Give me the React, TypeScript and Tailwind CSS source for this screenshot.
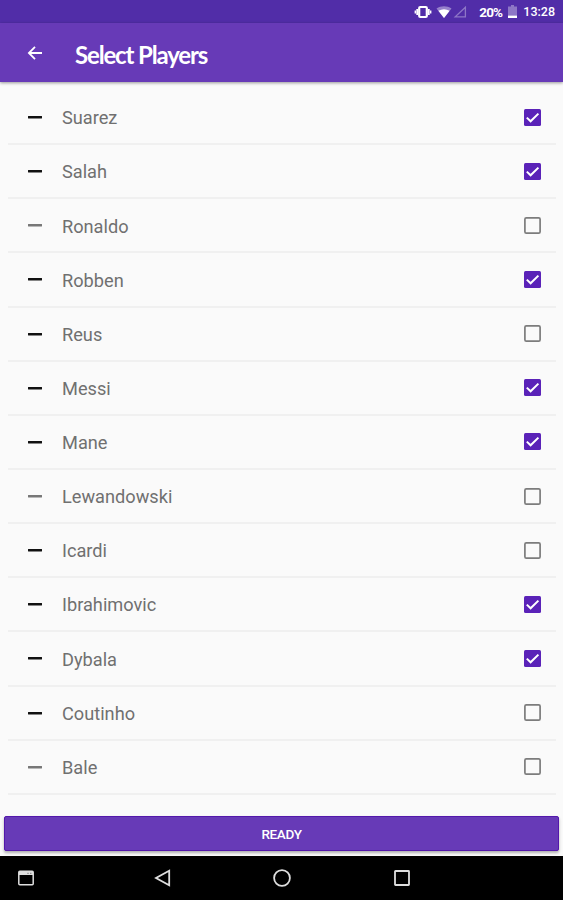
import { useState } from "react";

const initialPlayers = [
  { name: "Suarez", selected: true, faded: false },
  { name: "Salah", selected: true, faded: false },
  { name: "Ronaldo", selected: false, faded: true },
  { name: "Robben", selected: true, faded: false },
  { name: "Reus", selected: false, faded: false },
  { name: "Messi", selected: true, faded: false },
  { name: "Mane", selected: true, faded: false },
  { name: "Lewandowski", selected: false, faded: true },
  { name: "Icardi", selected: false, faded: false },
  { name: "Ibrahimovic", selected: true, faded: false },
  { name: "Dybala", selected: true, faded: false },
  { name: "Coutinho", selected: false, faded: false },
  { name: "Bale", selected: false, faded: true },
];

function StatusBar() {
  return (
    <div className="flex h-[23px] shrink-0 items-center justify-end bg-[#512da8] pt-px pr-2 text-white">
      <svg className="mr-1 h-4 w-[18px]" viewBox="0 0 18 16" fill="none" stroke="currentColor">
        <rect x="5.2" y="3" width="7.6" height="10" rx="1" strokeWidth="2.2" />
        <path d="M3.2 5v6M14.8 5v6" strokeWidth="1.8" />
        <path d="M1.3 6.5v3M16.7 6.5v3" strokeWidth="1.4" />
      </svg>
      <svg className="mr-px h-4 w-4" viewBox="0 0 16 16" fill="currentColor">
        <path d="M0.5 4.6C5 1.4 11 1.4 15.5 4.6L8 14z" opacity="0.4" />
        <path d="M2.4 6.8C6 4.8 10 4.8 13.6 6.8L8 14z" />
      </svg>
      <svg className="mr-3 h-4 w-[14px]" viewBox="0 0 14 16" fill="none" stroke="currentColor">
        <path d="M12.4 3.2v9.6H2.2z" strokeWidth="1.3" opacity="0.35" />
      </svg>
      <span className="mr-1.5 text-[13.5px] font-bold tracking-[-0.8px]">20%</span>
      <svg className="mr-1.5 h-[14px] w-[9px]" viewBox="0 0 9 14" fill="currentColor">
        <path d="M3 0h3v1.5h3V10.5H0V1.5h3z" opacity="0.35" />
        <path d="M0 10.5h9v2.5H0z" />
      </svg>
      <span className="text-[12.5px] font-medium">13:28</span>
    </div>
  );
}

function AppBar() {
  return (
    <header className="z-10 flex h-[59px] shrink-0 items-center bg-[#673ab7] pl-[27px] text-white shadow-[0_1px_3px_rgba(0,0,0,0.4)]">
      <button aria-label="Back">
        <svg className="h-4 w-4" viewBox="0 0 16 16" fill="none" stroke="currentColor" strokeWidth="1.8">
          <path d="M15 8H2M8 1.9L1.9 8L8 14.1" />
        </svg>
      </button>
      <h1 className="ml-8 pt-[4px] font-[Lato,sans-serif] text-[24px] font-bold tracking-[-1.15px]">Select Players</h1>
    </header>
  );
}

function Checkbox({ checked }: { checked: boolean }) {
  return (
    <svg className="h-[17px] w-[17px]" viewBox="0 0 17 17" fill="none">
      {checked ? (
        <>
          <rect width="17" height="17" rx="1.5" fill="#5a22b8" />
          <path d="M2.8 8.6L6.6 12.3L14.4 4.6" stroke="#fff" strokeWidth="2" />
        </>
      ) : (
        <rect x="0.9" y="0.9" width="15.2" height="15.2" rx="1.4" stroke="#7c7c7c" strokeWidth="1.7" />
      )}
    </svg>
  );
}

function NavigationBar() {
  return (
    <nav className="flex h-[44px] shrink-0 items-center bg-black text-[#dedede]">
      <svg className="ml-[18px] h-4 w-4" viewBox="0 0 16 16" fill="none" stroke="currentColor">
        <rect x="0.8" y="1.3" width="14.4" height="13.4" rx="1" strokeWidth="1.5" />
        <path d="M1 3.2h14" strokeWidth="3.6" />
        <path d="M9.5 3.3h1M12.3 3.3h1" stroke="#555" strokeWidth="1" />
      </svg>
      <svg className="ml-[120px] h-[18px] w-[17px]" viewBox="0 0 17 18" fill="none" stroke="currentColor" strokeWidth="1.8">
        <path d="M15.2 1.8v14.4L2 9z" />
      </svg>
      <svg className="ml-[102px] h-[18px] w-[18px]" viewBox="0 0 18 18" fill="none" stroke="currentColor" strokeWidth="1.8">
        <circle cx="9" cy="9" r="7.9" />
      </svg>
      <svg className="ml-[103px] h-4 w-4" viewBox="0 0 16 16" fill="none" stroke="currentColor" strokeWidth="1.8">
        <rect x="1" y="1" width="14" height="14" rx="0.5" />
      </svg>
    </nav>
  );
}

export default function App() {
  const [players, setPlayers] = useState(initialPlayers);

  const togglePlayer = (name: string) => {
    setPlayers((prev) => prev.map((p) => (p.name === name ? { ...p, selected: !p.selected } : p)));
  };

  return (
    <div className="flex h-[900px] w-full flex-col bg-[#fafafa] font-[Roboto,sans-serif]">
      <StatusBar />
      <AppBar />

      <ul className="flex-1 pr-[7px] pl-2 pt-[9px]">
        {players.map((player) => (
          <li
            key={player.name}
            className="flex h-[54.15px] cursor-pointer items-center border-b-2 border-[#f0f0f0] pr-[15px] pl-5"
            onClick={() => togglePlayer(player.name)}
          >
            <svg className="h-[4px] w-[14px]" viewBox="0 0 14 4">
              <rect y="1" width="14" height="2.4" rx="0.3" fill={player.faded ? "#777" : "#111"} />
            </svg>
            <span className="ml-5 flex-1 pt-[1.6px] text-[18.2px] text-[#707070]">{player.name}</span>
            <Checkbox checked={player.selected} />
          </li>
        ))}
      </ul>

      <div className="px-1 pb-[5px]">
        <button className="block h-[35px] w-full rounded-[2px] border border-[#5318ab] bg-[#673ab7] pt-px text-[13.5px] font-medium tracking-[-0.35px] text-white shadow-[0_2px_3px_rgba(0,0,0,0.3)]">
          READY
        </button>
      </div>
      <NavigationBar />
    </div>
  );
}
